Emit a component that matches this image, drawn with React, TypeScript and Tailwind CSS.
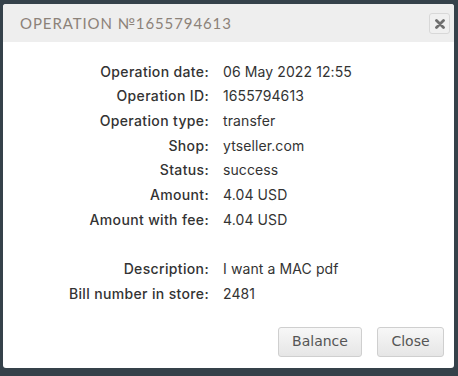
export default function App() {
  const rows: [string, string][] = [
    ["Operation date:", "06 May 2022 12:55"],
    ["Operation ID:", "1655794613"],
    ["Operation type:", "transfer"],
    ["Shop:", "ytseller.com"],
    ["Status:", "success"],
    ["Amount:", "4.04 USD"],
    ["Amount with fee:", "4.04 USD"],
    ["", ""],
    ["Description:", "I want a MAC pdf"],
    ["Bill number in store:", "2481"],
  ];

  return (
    <div className="w-[458px] h-[376px] bg-[#35414a] pt-[4px] pl-[3px] font-['Inter',sans-serif]">
      <div className="w-[451px] h-[364px] bg-white rounded-[3px] overflow-hidden flex flex-col">
        {/* Header */}
        <div className="h-[38px] bg-[#eeeeee] flex items-center justify-between pl-[17px] pr-[4px]">
          <h1 className="text-[15px] tracking-[0.9px] text-[#8c8279] font-['Lato',sans-serif] mt-[1px]">
            OPERATION №1655794613
          </h1>
          <button className="w-[21px] h-[21px] mt-[1px] rounded-[3px] border border-[#d8d8d8] bg-[#f0f0f0] flex items-center justify-center">
            <svg width="10" height="10" viewBox="0 0 10 10">
              <path d="M1.5 1.5 L8.5 8.5 M8.5 1.5 L1.5 8.5" stroke="#6f6f6f" strokeWidth="2.8" strokeLinecap="round" />
            </svg>
          </button>
        </div>

        {/* Details */}
        <div className="pt-[17px] pl-[17px] text-[14px] text-[#333333]">
          {rows.map(([label, value], i) => (
            <div key={i} className="flex h-[24.67px] items-center">
              <span className="w-[189px] text-right font-medium tracking-[0.35px] text-[#333333]">{label}</span>
              <span className="ml-[14px] tracking-[0.1px]">{value}</span>
            </div>
          ))}
        </div>

        {/* Footer */}
        <div className="flex justify-end gap-[15px] pr-[10px] mt-[21px]">
          <button className="w-[84px] h-[30px] rounded-[3px] border border-[#cfcfcf] bg-gradient-to-b from-[#f7f7f7] to-[#e6e6e6] text-[14px] text-[#555555] font-['DejaVu_Sans',sans-serif]">
            Balance
          </button>
          <button className="w-[67px] h-[30px] rounded-[3px] border border-[#cfcfcf] bg-gradient-to-b from-[#f7f7f7] to-[#e6e6e6] text-[14px] text-[#555555] font-['DejaVu_Sans',sans-serif]">
            Close
          </button>
        </div>
      </div>
    </div>
  );
}
